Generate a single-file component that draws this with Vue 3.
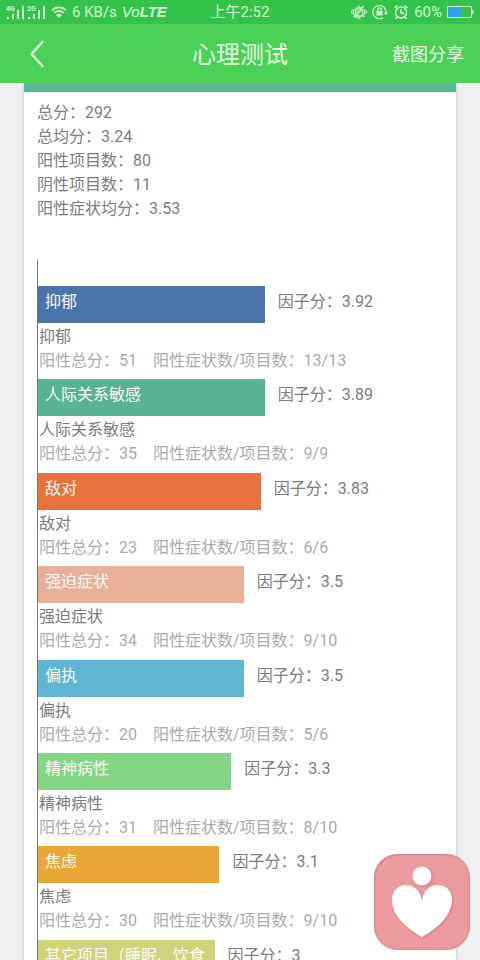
<script setup>
const summary = [
  { label: '总分', value: '292' },
  { label: '总均分', value: '3.24' },
  { label: '阳性项目数', value: '80' },
  { label: '阴性项目数', value: '11' },
  { label: '阳性症状均分', value: '3.53' },
]

const factors = [
  { name: '抑郁', score: '3.92', total: 51, ratio: '13/13', width: 56, color: '#4a74aa' },
  { name: '人际关系敏感', score: '3.89', total: 35, ratio: '9/9', width: 56, color: '#58b392' },
  { name: '敌对', score: '3.83', total: 23, ratio: '6/6', width: 55, color: '#e8723e' },
  { name: '强迫症状', score: '3.5', total: 34, ratio: '9/10', width: 50.8, color: '#e8b098' },
  { name: '偏执', score: '3.5', total: 20, ratio: '5/6', width: 50.8, color: '#60b5d2' },
  { name: '精神病性', score: '3.3', total: 31, ratio: '8/10', width: 47.7, color: '#84d586' },
  { name: '焦虑', score: '3.1', total: 30, ratio: '9/10', width: 44.8, color: '#e8a736' },
  { name: '其它项目（睡眠、饮食', score: '3', width: 43.6, color: '#d0d37c' },
]
</script>

<template>
  <div class="screen">
    <div class="status">
      <div class="status-left">
        <svg width="40" height="16" viewBox="0 0 40 16" aria-hidden="true">
          <g fill="currentColor">
            <rect x="1" y="13" width="2" height="2" /><rect x="6" y="10" width="2" height="5" />
            <rect x="11" y="6" width="2" height="9" /><rect x="16" y="2" width="2" height="13" />
            <rect x="22" y="13" width="2" height="2" /><rect x="27" y="10" width="2" height="5" />
            <rect x="32" y="6" width="2" height="9" /><rect x="37" y="2" width="2" height="13" />
          </g>
          <text x="0" y="7" class="net">4G</text>
          <text x="21" y="7" class="net">2G</text>
        </svg>
        <svg width="16" height="14" viewBox="0 0 16 14" fill="none" stroke="currentColor" stroke-width="1.600" aria-hidden="true">
          <path d="M1 5.200a10 10 0 0 1 14 0M3.300 7.800a6.800 6.800 0 0 1 9.400 0" />
          <path d="M5 9.800a4.400 4.400 0 0 1 6 0L8 13z" fill="currentColor" stroke="none" />
        </svg>
        <span>6 KB/s</span>
        <span class="volte">Vo<b>LTE</b></span>
      </div>
      <div>上午2:52</div>
      <div class="status-right">
        <svg width="16" height="16" viewBox="0 0 16 16" fill="none" stroke="currentColor" stroke-width="1.300" aria-hidden="true">
          <path d="M4.500 11V7a3.500 3.500 0 0 1 7 0v4l1 1h-9zM6.500 14h3M12.500 2 4 14M2.500 5v6M13.500 5v6M.7 6.500v3M15.300 6.500v3M8 1.500V3" />
          <path d="M5 11V7a3 3 0 0 1 4.500-2.500z" fill="currentColor" opacity=".5" stroke="none" />
        </svg>
        <svg width="16" height="16" viewBox="0 0 16 16" fill="none" stroke="currentColor" stroke-width="1.300" aria-hidden="true">
          <path d="M11 13.600A6.600 6.600 0 1 1 14 8.500" />
          <path d="M11.500 8.500H16L14 11z" fill="currentColor" stroke="none" />
          <rect x="4.500" y="7" width="6" height="4.500" fill="currentColor" stroke="none" />
          <path d="M5.700 7V5.600a1.800 1.800 0 0 1 3.600 0V7" />
        </svg>
        <svg width="16" height="16" viewBox="0 0 16 16" fill="none" stroke="currentColor" stroke-width="1.500" aria-hidden="true">
          <circle cx="8" cy="8.500" r="5.500" />
          <path d="M8 5.500V9h3M1.500 4 4.500 1.500M14.500 4l-3-2.500M4 13l-1.500 2M12 13l1.500 2" />
        </svg>
        <span>60%</span>
        <svg width="27" height="12" viewBox="0 0 27 12" aria-hidden="true">
          <rect x=".5" y=".5" width="24" height="11" fill="none" stroke="currentColor" />
          <rect x="1" y="1" width="13" height="10" fill="#2f9ff5" />
          <rect x="25" y="4" width="1.500" height="4" fill="currentColor" />
        </svg>
      </div>
    </div>

    <header class="nav">
      <button class="back" type="button" aria-label="返回">
        <svg width="14" height="28" viewBox="0 0 14 28" fill="none" stroke="currentColor" stroke-width="2.400" stroke-linecap="round" stroke-linejoin="round">
          <path d="M12.500 2 1.500 14l11 12" />
        </svg>
      </button>
      <h1>心理测试</h1>
      <button class="share" type="button">截图分享</button>
    </header>

    <main class="content">
      <section class="card">
        <ul>
          <li v-for="item in summary" :key="item.label">{{ item.label }}：{{ item.value }}</li>
        </ul>
        <ul class="chart">
          <li v-for="f in factors" :key="f.name">
            <div class="line">
              <div class="bar" :style="{ width: f.width + '%', background: f.color }">{{ f.name }}</div>
              <span>因子分：{{ f.score }}</span>
            </div>
            <template v-if="f.total">
              <div class="name">{{ f.name }}</div>
              <div class="detail">
                <span>阳性总分：{{ f.total }}</span>
                <span>阳性症状数/项目数：{{ f.ratio }}</span>
              </div>
            </template>
          </li>
        </ul>
      </section>
    </main>

    <button class="float" type="button" aria-label="心理服务">
      <svg viewBox="0 0 96 96" aria-hidden="true">
        <circle cx="48" cy="22" r="9.500" />
        <path d="M48 47C47 37 40 31 32 31C23 31 18 38 18 45C18 62 32 74 48 83C64 74 78 62 78 45C78 38 73 31 64 31C56 31 49 37 48 47Z" />
      </svg>
    </button>
  </div>
</template>

<style>
body {
  margin: 0;
}
</style>

<style scoped>
.screen {
  display: flex;
  flex-direction: column;
  height: 100vh;
  overflow: hidden;
  background: #f0f0f2;
  color: #7c7c7c;
  font: 16px/24px Roboto, "Noto Sans CJK SC", sans-serif;
}
ul {
  list-style: none;
  margin: 0;
  padding: 0;
}
button {
  border: 0;
  padding: 0;
  background: none;
  color: inherit;
  font: inherit;
}
.status {
  display: grid;
  grid-template-columns: 1fr auto 1fr;
  align-items: center;
  flex: none;
  height: 24px;
  padding: 0 6px;
  background: #35c24a;
  color: #d2f7d4;
  font-size: 15px;
}
.status-left,
.status-right {
  display: flex;
  align-items: center;
  gap: 5px;
}
.status-right {
  justify-content: flex-end;
}
.net {
  font: bold 7px Roboto, sans-serif;
  fill: currentColor;
}
.volte {
  font-family: "Liberation Sans", sans-serif;
  font-style: italic;
}
.nav {
  display: grid;
  grid-template-columns: 1fr auto 1fr;
  align-items: center;
  flex: none;
  height: 59px;
  padding: 0 16px;
  background: #4bd055;
  color: #e6fce4;
}
.back {
  justify-self: start;
  display: flex;
  padding: 0 14px;
}
h1 {
  margin: 0;
  padding-top: 2px;
  font-size: 24px;
  font-weight: 400;
  line-height: 32px;
}
.share {
  justify-self: end;
  padding-top: 2px;
  font-size: 18px;
}
.content {
  flex: 1;
  min-height: 0;
  overflow: hidden;
  padding: 0 24px;
}
.card {
  min-height: 100%;
  box-sizing: border-box;
  border-top: 9px solid #5bb698;
  padding: 9px 13px 0;
  background: #fff;
  box-shadow: 0 0 3px #bbb;
}
.chart {
  display: grid;
  grid-auto-rows: 1fr;
  min-height: 747px;
  margin-top: 39px;
  padding-top: 26px;
  border-left: 1px solid #777;
}
.line {
  display: flex;
  gap: 13px;
  padding-bottom: 2px;
  line-height: 32px;
}
.bar {
  box-sizing: border-box;
  flex: none;
  height: 37px;
  padding: 0 7px;
  overflow: hidden;
  color: #f7fbf2;
}
.name {
  padding-left: 1px;
}
.detail {
  display: flex;
  gap: 16px;
  padding-left: 1px;
  color: #aaa;
}
.float {
  position: fixed;
  right: 10px;
  bottom: 10px;
  width: 96px;
  height: 96px;
  border-radius: 24px;
  background: #ec9a9f;
  box-shadow: inset 1px 1px 2px #c98388, inset -1px -1px 2px #d98f94;
}
.float svg {
  display: block;
  fill: #fff;
  filter: drop-shadow(1px 1px 1px #c97f85);
}
</style>
